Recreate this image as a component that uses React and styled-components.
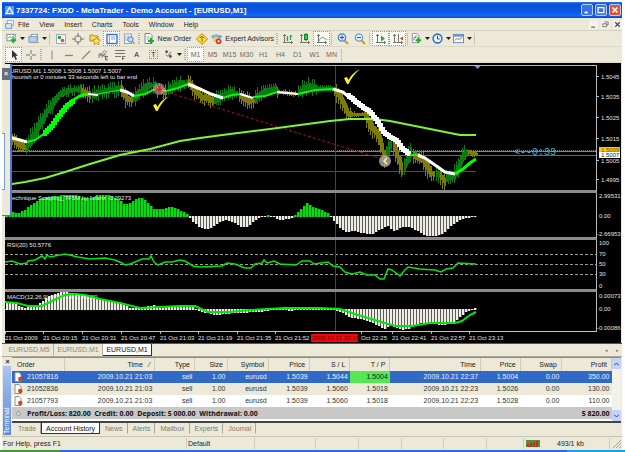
import React from 'react';
import styled, {createGlobalStyle} from 'styled-components';

const GlobalStyle = createGlobalStyle`
    * { box-sizing: border-box; }
    body {
        margin: 0;
        background: #fdfdfd;
        font-family: "Liberation Sans", Arial, sans-serif;
        font-size: 7px;
        color: #222;
    }
    button {
        font: inherit;
        color: inherit;
        border: 0;
        padding: 0;
        margin: 0;
        background: none;
    }
`;

const Page = styled.div`
    display: flex;
    flex-direction: column;
`;
const Window = styled.div`
    display: flex;
    flex-direction: column;
    margin: 2px 3px 0 2px;
    background: #ece9d8;
`;

/* title and menu */
const TitleBar = styled.header`
    display: flex;
    align-items: center;
    gap: 2px;
    height: 16px;
    padding: 0 1px 0 3px;
    background: linear-gradient(#2a7cf0, #0a4fd6 15%, #0b57e4 60%, #1268f8 85%, #0a45c0);
`;
const TitleText = styled.h1`
    flex: 1;
    margin: 0;
    font: bold 8px "Liberation Sans", Arial, sans-serif;
    color: #fff;
    white-space: nowrap;
`;
const WinButton = styled.button`
    display: flex;
    width: 12px;
    height: 12px;
    border: 1px solid #b9cdf5;
    border-radius: 2px;
    background: ${(p) => (p.$close ? '#e0532c' : '#3a72e4')};
`;
const MenuBar = styled.nav`
    display: flex;
    align-items: center;
    gap: 10px;
    height: 13px;
    padding: 0 0 0 3px;
    border-bottom: 1px solid #d6d2c2;
`;
const MenuIcon = styled.span`
    display: flex;
    margin-right: -6px;
`;
const MdiButtons = styled.div`
    display: flex;
    gap: 3px;
    margin-left: auto;
    button {
        display: flex;
        width: 9px;
        height: 9px;
        background: #f4f2ea;
    }
`;

/* toolbars */
const Toolbar = styled.div`
    display: flex;
    align-items: center;
    height: 16px;
    padding-left: 3px;
    border-bottom: 1px solid #dedac8;
`;
const Grip = styled.span`
    width: 2px;
    height: 11px;
    margin: 0 1px;
    background: repeating-linear-gradient(#b4b09e 0 1px, #ece9d8 1px 2px);
`;
const Divider = styled.span`
    width: 1px;
    height: 12px;
    margin: 0 2px 0 1px;
    background: #c8c4b2;
`;
const ToolButton = styled.button`
    display: flex;
    align-items: center;
    justify-content: center;
    gap: 3px;
    flex: none;
    width: ${(p) => p.$w || 17}px;
    height: 15px;
    color: ${(p) => (p.$period ? '#6d6a60' : '#222')};
    border: 1px dotted ${(p) => (p.$on ? '#9a978c' : 'transparent')};
    background: ${(p) => (p.$on ? '#f8f7f2' : 'none')};
    white-space: nowrap;
`;

/* chart */
const ChartArea = styled.main`
    position: relative;
    margin: 0 1px 0 3px;
    padding-top: 2px;
    background: #000;
`;
const Pane = styled.section`
    display: grid;
    grid-template-columns: 1fr 24px;
`;
const Plot = styled.svg`
    display: block;
    width: 100%;
    height: ${(p) => p.$h}px;
    border-right: 1px solid #b8b8b8;
    border-top: ${(p) => (p.$top ? '1px solid #b8b8b8' : '0')};
    border-bottom: ${(p) => (p.$last ? '1px solid #c8c8c8' : '3px solid #8c8c8c')};
`;
const Scale = styled.svg`
    display: block;
    width: 24px;
    height: ${(p) => p.$h}px;
    font-size: 6px;
    fill: #e0e0e0;
`;
const TimeScale = styled.svg`
    display: block;
    width: 100%;
    height: 11px;
    font-size: 6px;
    fill: #e0e0e0;
`;
// narrow leftover of the collapsed Navigator, floating over the chart
const DockedPanel = styled.aside`
    position: absolute;
    left: -3px;
    top: 1px;
    width: 10px;
    height: 152px;
    background: #ece9d8;
    border-right: 2px solid #4a74e0;
    border-bottom: 1px solid #4a74e0;
    display: flex;
    flex-direction: column;
    justify-content: space-between;
`;
const DockClose = styled.button`
    width: 8px;
    height: 12px;
    margin-top: 4px;
    background: #6c6c74;
    color: #fff;
    font-weight: bold;
    line-height: 10px;
`;
const DockList = styled.div`
    width: 3px;
    height: 57px;
    margin-bottom: 25px;
    border: 1px solid #7f9db9;
    border-left: 0;
    background: #fff;
`;

/* tabs */
const ChartTabs = styled.div`
    display: flex;
    align-items: flex-start;
    height: 14px;
    padding-left: 3px;
    border-top: 1px solid #555;
    border-bottom: 1px solid #aaa799;
`;
const ChartTab = styled.button`
    width: 49px;
    height: 12px;
    color: ${(p) => (p.$on ? '#111' : '#8a8779')};
    background: ${(p) => (p.$on ? '#fff' : 'none')};
    border-right: 1px solid ${(p) => (p.$on ? '#333' : '#b5b1a0')};
    border-bottom: 1px solid ${(p) => (p.$on ? '#333' : 'transparent')};
`;
const TabArrows = styled.div`
    display: flex;
    gap: 8px;
    margin: 3px 3px 0 auto;
    button { color: #777; font-size: 5px; }
`;

/* terminal */
const Terminal = styled.section`
    display: flex;
    height: 78px;
`;
const SideStrip = styled.div`
    display: flex;
    flex-direction: column;
    justify-content: space-between;
    width: 10px;
    padding-left: 1px;
    button { height: 9px; font-weight: bold; }
`;
const SideTitle = styled.div`
    flex: 1;
    width: 8px;
    padding-top: 1px;
    writing-mode: vertical-rl;
    transform: rotate(180deg);
    line-height: 8px;
    color: #fff;
    background: linear-gradient(#5c88dc, #a9c4f2);
`;
const TerminalBody = styled.div`
    flex: 1;
    min-width: 0;
    display: flex;
    flex-direction: column;
`;
const TableWrap = styled.div`
    display: flex;
    height: 66px;
    margin-right: 1px;
    border-top: 1px solid #8f8c80;
    border-bottom: 2px solid #444;
    background: #fff;
`;
const Orders = styled.table`
    flex: 1;
    align-self: flex-start;
    table-layout: fixed;
    width: 100%;
    border-collapse: collapse;
    th, td {
        height: 12px;
        padding: 0 2px;
        line-height: 8px;
        text-align: right;
        white-space: nowrap;
        font-weight: normal;
    }
    th {
        height: 13px;
        padding-right: 4px;
        background: #ece9d8;
        border-right: 1px solid #d0ccba;
    }
    th:first-child, td:first-child { text-align: left; }
    th:first-child { padding-left: 5px; }
`;
const OrderRow = styled.tr`
    background: ${(p) => (p.$on ? '#316ac5' : p.$alt ? '#ece9d8' : '#fff')};
    color: ${(p) => (p.$on ? '#e8effc' : '#333')};
`;
const HitCell = styled.td`
    background: ${(p) => (p.$hit ? '#55e855' : 'none')};
    color: ${(p) => (p.$hit ? '#123' : 'inherit')};
`;
const OrderId = styled.span`
    display: flex;
    align-items: center;
    gap: 4px;
`;
const TotalRow = styled.tr`
    background: #c8c8c6;
    color: #111;
    td { font: bold 7px "Open Sans", sans-serif; }
`;
const ScrollBar = styled.div`
    display: flex;
    flex-direction: column;
    justify-content: space-between;
    width: 9px;
    background: #f3f2ea;
    button {
        display: flex;
        align-items: center;
        justify-content: center;
        width: 9px;
        height: 11px;
        background: #c3d3fb;
        border-radius: 1px;
    }
`;
const TerminalTabs = styled.div`
    display: flex;
    height: 12px;
    padding-left: 1px;
`;
const TerminalTab = styled.button`
    height: 11px;
    padding: 0 4px;
    color: ${(p) => (p.$on ? '#111' : '#7d7a6e')};
    background: ${(p) => (p.$on ? '#fff' : 'none')};
    border-right: 1px solid ${(p) => (p.$on ? '#333' : '#a9a698')};
    border-bottom: 1px solid ${(p) => (p.$on ? '#333' : 'transparent')};
    border-left: 1px solid ${(p) => (p.$on ? '#333' : 'transparent')};
`;

const StatusBar = styled.footer`
    display: grid;
    grid-template-columns: 185px 68px 61px 43px 43px 42px 43px 37px 1fr 12px;
    align-items: center;
    height: 14px;
    margin-top: 1px;
    border-top: 1px solid #c8c4b2;
    > span {
        display: flex;
        align-items: center;
        height: 11px;
        padding-left: 1px;
        border-right: 1px solid #d0ccba;
    }
`;
const TaskBar = styled.div`
    display: grid;
    grid-template-columns: 60px 1fr 58px;
    height: 3px;
    background: #2a6be8;
    span:first-child { background: #3a9a3c; }
    span:last-child { background: #18a0f0; }
`;

const Icon = ({children, size = 12}) => (
    <svg width={size} height={size} viewBox="0 0 12 12" fill="none" aria-hidden="true">{children}</svg>
);

const Plus = ({x, y, c = '#1fae2b'}) => (
    <path d={`M${x - 3} ${y}h6M${x} ${y - 3}v6`} stroke={c} strokeWidth="2.2"/>
);
const Axes = () => <path d="M2.5 1v9M1 9.5h10M9.5 8v3M1 2.5h3" stroke="#77746a"/>;

const icons = {
    newChart: <><rect x="1" y="1.5" width="9" height="7" fill="#fff" stroke="#7d8894"/><path d="M2 6l2-2 2 1 3-2" stroke="#678"/><Plus x={8} y={8}/></>,
    profiles: <><rect x="3.5" y="1.5" width="7" height="6" fill="#f5f8fc" stroke="#7d92b4"/><rect x="1" y="4" width="9" height="6" fill="#b8d0ee" stroke="#7490b8"/><path d="M3 10.5h9" stroke="#999"/></>,
    market: <><rect x="1.5" y="1.5" width="9" height="9" fill="#f4fafe" stroke="#98adc5"/><circle cx="4.5" cy="4.5" r="1.8" fill="#28a43c"/><circle cx="7.5" cy="7.5" r="1.8" fill="#d84c38"/></>,
    target: <><circle cx="6" cy="6" r="3.3" stroke="#777"/><path d="M6 0v4M6 8v4M0 6h4M8 6h4" stroke="#777"/></>,
    navigator: <><path d="M1 2h3l1 1h4v5H1z" fill="#f6dc60" stroke="#b58d1a"/><path d="M7.500 4l1.200 2.500 2.800.4-2 2 .5 2.800-2.500-1.300-2.500 1.300.5-2.800-2-2 2.800-.4z" fill="#ffe45c" stroke="#a8821c" strokeWidth=".7"/></>,
    terminal: <><rect x="1" y="1.500" width="10" height="9" fill="#fff" stroke="#3f71c8" strokeWidth="1.400"/><path d="M3.500 2v8M5 4h4M5 6h4" stroke="#7aa5dd"/></>,
    tester: <><rect x="1.500" y="1" width="7" height="9.500" fill="#f6f8fb" stroke="#92a5bd"/><path d="M3 3v5M5 2v6M7 3v5" stroke="#a4b4cc"/><circle cx="7.500" cy="6.500" r="2.700" fill="#c2dcf8" stroke="#4b7fc4"/><path d="M9.500 8.500l2 2.500" stroke="#c79c28" strokeWidth="1.600"/></>,
    order: <><path d="M2 .5h5l2 2v8H2z" fill="#fff" stroke="#7b8590"/><path d="M3.500 4h4M3.500 6h3" stroke="#9ab"/><Plus x={8} y={8}/></>,
    editor: <><path d="M6 .5L11.500 6 6 11.500.5 6z" fill="#ffda3c" stroke="#b58410"/><path d="M6 3v6M4 5l2-2 2 2" stroke="#9b6e00"/></>,
    advisors: <><ellipse cx="6" cy="3.500" rx="5.500" ry="2" fill="#6aa0de"/><path d="M2.500 4c0-4 6-4 6 0" fill="#7fb2ea"/><circle cx="5" cy="6.500" r="3" fill="#f1cd52"/><circle cx="8" cy="8.500" r="3" fill="#dc3626"/><rect x="7" y="7.500" width="2" height="2" fill="#fff"/></>,
    bars: <><Axes/><path d="M5.500 3v5M8.500 2v5M8.500 3h2M5.500 6h-1" stroke="#23a236" strokeWidth="1.200"/></>,
    candles: <><Axes/><path d="M7 0v8" stroke="#148222"/><rect x="5.500" y="1.500" width="3" height="5" fill="#34cf45" stroke="#148222"/></>,
    line: <><Axes/><path d="M3 8c2-5 4-4 8-1" stroke="#5aa568"/></>,
    zoomIn: <><path d="M7.500 7.500l3.500 3.500" stroke="#c79c28" strokeWidth="2"/><circle cx="5" cy="4.500" r="3.700" fill="#d3e8fc" stroke="#4b7fc4" strokeWidth="1.200"/><path d="M3 4.500h4M5 2.500v4" stroke="#2458a8"/></>,
    zoomOut: <><path d="M7.500 7.500l3.500 3.500" stroke="#c79c28" strokeWidth="2"/><circle cx="5" cy="4.500" r="3.700" fill="#e0effc" stroke="#7396c4" strokeWidth="1.200"/><path d="M3 4.500h4" stroke="#2458a8"/></>,
    scroll: <><Axes/><path d="M6 2.500l4 3-4 3z" fill="#25a638"/></>,
    shift: <><Axes/><path d="M6.500 1v8" stroke="#777"/><path d="M11 3.500L8 5.500l3 2z" fill="#cc3c24"/></>,
    indicator: <><path d="M1.500.5h5l2 2v8h-7z" fill="#fff" stroke="#8993a0"/><path d="M3 8c1-5 2-5 4-5M3 5h3" stroke="#777"/><Plus x={8} y={8}/></>,
    clock: <><circle cx="6" cy="6" r="4.800" fill="#eef6ff" stroke="#3470cc" strokeWidth="1.700"/><path d="M6 3v3.500h2.500" stroke="#345"/></>,
    template: <><rect x=".5" y="1.500" width="11" height="9" fill="#f7fbff" stroke="#5b8ac4"/><path d="M1 3h10" stroke="#5b98de" strokeWidth="2"/><path d="M2 8l2.500-2 2 1L10 5" stroke="#c45c3c"/></>,
    cursor: <path d="M4 1v8l2-1.700L7.500 11 9 10.300 7.500 6.800H10z" fill="#333"/>,
    cross: <path d="M6 1v4M6 7v4M1 6h4M7 6h4" stroke="#77746a"/>,
    vline: <path d="M6 1.500v9" stroke="#88857a"/>,
    hline: <path d="M2 6.500h8" stroke="#88857a" strokeWidth="1.300"/>,
    trend: <path d="M2 10l8-8" stroke="#88857a" strokeWidth="1.300"/>,
    channel: <><path d="M1 9l7-8M4 9l6-7M1 6h8M2 4l6 4" stroke="#77746a" strokeWidth=".9"/><path d="M8.500 7v4M8.500 7.500h2.500M8.500 9h2M8.500 11h2.500" stroke="#555" strokeWidth=".8"/></>,
    fibo: <><path d="M1 1.500h10M1 4.500h10M1 7.500h6" stroke="#77746a"/><path d="M8.500 7v4M8.500 7.500h3M8.500 9.500h2" stroke="#555" strokeWidth=".8"/></>,
    text: <rect x="1.500" y="1.500" width="9" height="9" stroke="#9a978c" strokeDasharray="1 1"/>,
    arrows: <><path d="M2 3l2-2 2 2-2 2zM6 8l2-2 2 2-2 2z" fill="#555"/><path d="M3 6l2 2 4-5" stroke="#666"/></>,
};

const Drop = () => (
    <svg width="5" height="3" viewBox="0 0 5 3" aria-hidden="true"><path d="M0 0h5L2.500 3z" fill="#222"/></svg>
);

const LabelBox = styled.span`
    width: 9px;
    height: 9px;
    border: 1px dotted #8a877c;
    line-height: 7px;
    text-align: center;
`;

const Tool = ({name, label, drop, on, w, children}) => (
    <ToolButton $on={on} $w={w} aria-label={label}>
        {name && <Icon size={drop ? 11 : 12}>{icons[name]}</Icon>}
        {children}
        {drop && <Drop/>}
    </ToolButton>
);

// series are [x, y] knots, sampled by linear interpolation
const sample = (knots, x) => {
    for (let i = 1; i < knots.length; i++) {
        if (x <= knots[i][0]) {
            const [x0, y0] = knots[i - 1];
            const [x1, y1] = knots[i];
            return y0 + ((y1 - y0) * (x - x0)) / (x1 - x0);
        }
    }
    return knots[knots.length - 1][1];
};
const toPath = (knots) => 'M' + knots.map((k) => k.join(' ')).join('L');
const stepPath = (knots) => {
    let d = `M${knots[0][0]} ${Math.round(knots[0][1])}`;
    const end = knots[knots.length - 1][0];
    for (let x = knots[0][0]; x < end; x += 2) {
        d += `H${x}V${Math.round(sample(knots, x))}`;
    }
    return d + `H${end}`;
};
const rnd = (n) => {
    const v = Math.sin(n * 12.9898) * 43758.5453;
    return v - Math.floor(v);
};

const UP = '#0b7a12';
const DOWN = '#7d7a0c';

const priceLegs = [
    [DOWN, [[6, 136], [12, 139], [18, 144], [25, 148]]],
    [UP, [[26, 146], [33, 135], [40, 122], [48, 109], [55, 99], [60, 94], [67, 91], [75, 90], [80, 89]]],
    [DOWN, [[81, 91], [90, 96]]],
    [UP, [[92, 95], [100, 92], [110, 90], [120, 88]]],
    [DOWN, [[121, 91], [126, 99], [131, 100]]],
    [UP, [[133, 98], [140, 91], [147, 86], [155, 85]]],
    [DOWN, [[157, 89], [166, 93]]],
    [UP, [[168, 88], [178, 84], [186, 83]]],
    [DOWN, [[188, 83], [195, 91], [200, 97], [206, 98], [212, 101]]],
    [UP, [[214, 100], [223, 95], [229, 92], [237, 94]]],
    [DOWN, [[239, 96], [246, 101], [253, 101]]],
    [UP, [[255, 98], [262, 92], [275, 88]]],
    [DOWN, [[277, 92], [296, 94]]],
    [UP, [[298, 92], [308, 86], [314, 88], [332, 89]]],
    [DOWN, [[334, 91], [340, 98], [344, 107], [348, 114], [365, 115], [368, 123], [375, 132], [379, 140], [382, 150], [385, 160]]],
    [UP, [[386, 153], [391, 141]]],
    [DOWN, [[393, 144], [397, 157], [402, 171]]],
    [UP, [[404, 165], [411, 150]]],
    [DOWN, [[413, 155], [422, 160], [430, 173], [434, 175]]],
    [UP, [[436, 174], [439, 175]]],
    [DOWN, [[440, 176], [444, 182]]],
    [UP, [[446, 178], [454, 175], [458, 166], [462, 157], [466, 153]]],
    [DOWN, [[468, 153], [476, 154]]],
];

const candles = priceLegs.flatMap(([color, knots]) => {
    const out = [];
    const first = knots[0][0];
    const last = knots[knots.length - 1][0];
    for (let x = first; x <= last; x += 2) {
        const y = sample(knots, x);
        const slope = Math.abs(sample(knots, x + 2) - sample(knots, x - 2));
        const calm = x > 464 || (x > 278 && x < 298) || (x > 316 && x < 335) || (x > 350 && x < 364);
        const body = (calm ? 2 : 3) + slope * 0.8 + rnd(x) * (calm ? 1 : 4);
        out.push({x, y, body, color, hi: rnd(x + 7) * (calm ? 2 : 6), lo: rnd(x + 3) * (calm ? 2 : 6)});
    }
    return out;
});

const fastMa = [
    ['#fff', 3, [[5, 137], [12, 138], [20, 140], [27, 142]]],
    ['#0f0', 2, [[27, 142], [35, 140], [45, 133]]],
    ['#0f0', 4, [[43, 134], [50, 127], [55, 120], [65, 107], [75, 99]]],
    ['#0f0', 3, [[73, 100], [80, 96], [88, 94]]],
    ['#fff', 2, [[88, 94], [98, 95]]],
    ['#0f0', 1, [[98, 94], [120, 90]]],
    ['#fff', 3, [[120, 90], [127, 92], [134, 96]]],
    ['#0f0', 2, [[134, 96], [145, 94], [153, 90], [158, 89]]],
    ['#fff', 1, [[158, 89], [166, 91]]],
    ['#0f0', 2, [[166, 91], [178, 88], [188, 84]]],
    ['#fff', 3, [[188, 84], [200, 89], [211, 94], [223, 98]]],
    ['#0f0', 2, [[223, 98], [232, 95], [240, 94]]],
    ['#fff', 2, [[240, 94], [253, 98]]],
    ['#0f0', 2, [[253, 97], [265, 96], [277, 92]]],
    ['#fff', 2, [[277, 92], [298, 94]]],
    ['#0f0', 2, [[298, 94], [315, 90], [333, 89]]],
    ['#fff', 3, [[333, 89], [343, 92], [350, 98]]],
    ['#fff', 4, [[347, 95], [358, 104], [368, 111], [376, 120], [383, 132], [390, 138], [396, 140], [402, 149], [410, 155]]],
    ['#0f0', 2, [[410, 155], [418, 155]]],
    ['#fff', 3, [[418, 155], [425, 158], [435, 165], [445, 172], [455, 174]]],
    ['#0f0', 3, [[455, 174], [463, 169], [470, 163], [476, 159]]],
];

const slowMa = [[5, 185], [12, 184], [25, 182], [45, 178], [65, 172], [90, 164], [120, 155], [150, 149], [180, 141], [200, 138], [230, 134], [270, 129], [300, 125], [330, 121], [350, 119], [375, 119], [390, 121], [410, 125], [430, 129], [450, 133], [460, 135], [476, 135]];

const scalping = [[5, 211], [12, 212], [17, 213], [22, 211], [30, 205], [38, 199], [50, 196], [65, 195], [75, 195], [82, 198], [90, 198], [97, 195], [110, 195], [118, 200], [125, 205], [133, 200], [140, 197], [146, 202], [153, 209], [160, 209], [168, 207], [175, 208], [183, 212], [188, 216], [193, 222], [200, 227], [207, 228], [213, 225], [223, 219], [232, 221], [240, 226], [246, 226], [252, 221], [258, 217], [266, 215], [272, 216], [280, 219], [288, 218], [293, 216], [298, 211], [306, 203], [312, 207], [320, 210], [327, 213], [331, 217], [335, 222], [340, 228], [346, 231], [355, 230], [365, 233], [372, 233], [380, 228], [387, 225], [393, 230], [400, 227], [407, 225], [415, 229], [425, 235], [435, 235], [443, 232], [450, 225], [458, 219], [465, 217], [476, 216]];

const rsi = [[5, 262], [12, 261], [20, 264], [27, 263], [28, 261], [35, 260], [42, 256], [45, 259], [47, 255], [50, 257], [65, 254], [78, 257], [90, 259], [105, 258], [115, 260], [122, 263], [125, 265], [130, 264], [135, 262], [142, 259], [149, 259], [151, 256], [154, 262], [158, 265], [165, 262], [172, 262], [180, 260], [185, 261], [193, 266], [200, 267], [222, 266], [227, 263], [235, 264], [245, 268], [251, 268], [255, 264], [262, 263], [264, 260], [267, 263], [274, 261], [280, 264], [296, 265], [302, 261], [310, 261], [314, 264], [328, 262], [333, 266], [340, 267], [345, 272], [352, 274], [360, 272], [367, 275], [375, 275], [380, 279], [384, 279], [388, 269], [392, 270], [400, 276], [404, 271], [408, 267], [420, 269], [435, 270], [441, 272], [446, 269], [453, 268], [458, 263], [476, 264]];

const macd = [[5, 302], [15, 304], [22, 308], [30, 307], [38, 304], [45, 298], [52, 294], [62, 292], [75, 293], [90, 296], [100, 299], [110, 301], [120, 303], [130, 308], [145, 307], [152, 305], [160, 308], [175, 306], [190, 306], [195, 309], [205, 312], [215, 314], [235, 312], [260, 311], [275, 308], [290, 310], [310, 307], [330, 308], [340, 311], [350, 317], [360, 318], [370, 321], [378, 325], [384, 328], [390, 324], [395, 327], [401, 329], [408, 328], [412, 325], [418, 322], [430, 323], [442, 324], [452, 322], [460, 315], [467, 310], [476, 308]];
const macdSignal = [[5, 302], [17, 303], [28, 306], [42, 306], [52, 301], [65, 295], [75, 294], [85, 295], [100, 299], [120, 303], [140, 308], [160, 307], [180, 306], [195, 306], [208, 312], [230, 312], [250, 310], [285, 308], [320, 308], [340, 309], [355, 314], [378, 321], [395, 326], [412, 326], [430, 323], [455, 323], [462, 321], [470, 315], [476, 312]];

const Histogram = ({knots, base, up, upDim}) => {
    const bars = [];
    for (let x = 6; x <= 476; x += 3) {
        const y = Math.round(sample(knots, x));
        const top = Math.min(y, base);
        const h = Math.abs(y - base) + 1;
        bars.push(
            <g key={x}>
                <rect x={x} y={top} width="3" height={h} fill={y < base ? upDim : '#5c5a56'}/>
                <rect x={x} y={top} width="2" height={h} fill={y < base ? up : '#efede6'}/>
            </g>
        );
    }
    return <g shapeRendering="crispEdges">{bars}</g>;
};

const Cursor = () => (
    <path d="M335 60h1v285h-1z" fill="#c01010" shapeRendering="crispEdges"/>
);

const Check = ({x, y}) => (
    <path transform={`translate(${x} ${y})`} d="M0 9l3-1 1.500 3Q8 4 16 0 8 7 4.500 15L3 15z" fill="#fff01c"/>
);

const prices = [['1.5045', 77], ['1.5035', 97], ['1.5025', 118], ['1.5015', 139], ['1.5005', 161], ['1.4995', 180]];

const PricePane = () => (
    <Pane>
        <Plot $h={128} $top>
            <g transform="translate(-5 -66)">
                <path d="M5 150.500H600" stroke="#8c8420" strokeDasharray="1 1"/>
                <path d="M5 151.500H600" stroke="#9c8c20"/>
                <path d="M5 155.500H600" stroke="#5a62b0"/>
                <path d="M5 171h471v1H5z" fill="#c81c12" shapeRendering="crispEdges"/>
                <Cursor/>
                <path d="M160 90L385 160" stroke="#b01010" strokeDasharray="3 2"/>
                <g shapeRendering="crispEdges">
                    {candles.map((c) => (
                        <g key={c.x} fill={c.color}>
                            <rect x={c.x} y={c.y - c.body / 2 - c.hi} width="1" height={c.body + c.hi + c.lo}/>
                            <rect x={c.x} y={c.y - c.body / 2} width="2" height={c.body}/>
                        </g>
                    ))}
                </g>
                <path d={toPath(slowMa)} fill="none" stroke="#7cf53a" strokeWidth="2"/>
                {fastMa.map(([color, w, knots]) => (
                    <path key={knots[0][0]} d={w > 3 ? stepPath(knots) : toPath(knots)} fill="none" stroke={color} strokeWidth={w}/>
                ))}
                <circle cx="159" cy="89" r="6" fill="#a89890" opacity=".65"/>
                <path d="M156 89.500h6M159.500 86v6" stroke="#f01818" strokeWidth="2"/>
                <circle cx="385" cy="161" r="6" fill="#b0a49a" opacity=".85"/>
                <path d="M387 158l-3 3 3 3" stroke="#ffe9b0" strokeWidth="1.500" fill="none"/>
                <Check x={344} y={69}/>
                <Check x={153} y={96}/>
                <path d="M474.500 66h6l-3 3z" fill="#7c90d8"/>
                <text x="10" y="73" fontSize="6" fill="#e8e8e8">URUSD,M1  1.5008 1.5008 1.5007 1.5007</text>
                <text x="12" y="79" fontSize="6" fill="#e8e8e8">hourish or 0 minutes 33 seconds left to bar end</text>
                <text x="514" y="155" fontSize="10" fill="#38b8cc" fontFamily="Liberation Mono, monospace">{'<--0:33'}</text>
            </g>
        </Plot>
        <Scale $h={128}>
            <g transform="translate(-597 -65)">
                {prices.map(([t, y]) => (
                    <g key={t}>
                        <path d={`M597 ${y - 0.5}h2`} stroke="#bbb"/>
                        <text x="601" y={y + 2}>{t}</text>
                    </g>
                ))}
                <rect x="599" y="147" width="21" height="5" fill="#f8c80c"/>
                <text x="601" y="152" fill="#765400">1.5009</text>
                <rect x="599" y="152" width="21" height="6" fill="#fff"/>
                <text x="601" y="157" fill="#222">1.5007</text>
            </g>
        </Scale>
    </Pane>
);

const ScaleLabels = ({top, h, items}) => (
    <Scale $h={h}>
        <g transform={`translate(-597 -${top})`}>
            {items.map(([t, y]) => <text key={t} x={t[0] === '-' ? 597 : 599} y={y + 2}>{t}</text>)}
        </g>
    </Scale>
);

const times = [[5, '21 Oct 2009'], [43, '21 Oct 20:15'], [82, '21 Oct 20:31'], [121, '21 Oct 20:47'], [160, '21 Oct 21:03'], [198, '21 Oct 21:19'], [237, '21 Oct 21:35'], [275, '21 Oct 21:52'], [361, 'Oct 22:25'], [392, '21 Oct 22:41'], [431, '21 Oct 22:57'], [469, '21 Oct 23:13']];

const Chart = () => (
    <ChartArea>
        <PricePane/>
        <Pane>
            <Plot $h={47}>
                <g transform="translate(-5 -193)">
                    <path d="M5 216.500H477" stroke="#999"/>
                    <Histogram knots={scalping} base={216} up="#00e00a" upDim="#007a06"/>
                    <Cursor/>
                    <text x="12" y="200" fontSize="6" fill="#e8e8e8">echnique Scalping_TF5M by fxfariz -0.09273</text>
                </g>
            </Plot>
            <ScaleLabels top={193} h={47} items={[['2.99531', 196], ['0.00', 216], ['-2.66953', 234]]}/>
        </Pane>
        <Pane>
            <Plot $h={52}>
                <g transform="translate(-5 -240)">
                    <path d="M5 254.500H600M5 264.500H600M5 274.500H600" stroke="#a09e90" strokeDasharray="3 2"/>
                    <Cursor/>
                    <path d={toPath(rsi)} fill="none" stroke="#00e808" strokeWidth="1.500"/>
                    <text x="7" y="247" fontSize="6" fill="#e8e8e8">RSI(20) 50.5776</text>
                </g>
            </Plot>
            <ScaleLabels top={240} h={52} items={[['100', 243], ['70', 254], ['50', 264], ['30', 274], ['0', 286]]}/>
        </Pane>
        <Pane>
            <Plot $h={40} $last>
                <g transform="translate(-5 -292)">
                    <path d="M5 309.500H477" stroke="#999"/>
                    <Histogram knots={macd} base={309} up="#efede6" upDim="#5c5a56"/>
                    <Cursor/>
                    <text x="7" y="299" fontSize="6" fill="#e8e8e8">MACD(12,26,9) 0.00014 -0.00020</text>
                    <path d={toPath(macdSignal)} fill="none" stroke="#00e808" strokeWidth="2"/>
                </g>
            </Plot>
            <ScaleLabels top={292} h={40} items={[['0.00073', 296], ['0.00', 309], ['-0.00086', 328]]}/>
        </Pane>
        <TimeScale>
            <g transform="translate(-5 -332)">
                {times.map(([x, t]) => (
                    <g key={t}>
                        <path d={`M${x + 0.5} 332v2`} stroke="#bbb"/>
                        <text x={x} y="340">{t}</text>
                    </g>
                ))}
                <rect x="311" y="334" width="47" height="8" fill="#f00808"/>
                <text x="312" y="340" fill="#500">2009.10.21 22:17</text>
            </g>
        </TimeScale>
        <DockedPanel>
            <DockClose aria-label="Close navigator">×</DockClose>
            <DockList/>
        </DockedPanel>
    </ChartArea>
);

const columns = [['Order', 52], ['Time', 90], ['Type', 40], ['Size', 33], ['Symbol', 41], ['Price', 41], ['S / L', 40], ['T / P', 40], ['Time', 90], ['Price', 40], ['Swap', 41], ['Profit', 50]];
const orders = [
    ['21057816', '2009.10.21 21:03', 'sell', '1.00', 'eurusd', '1.5039', '1.5044', '1.5004', '2009.10.21 22:37', '1.5004', '0.00', '350.00'],
    ['21052836', '2009.10.21 21:03', 'sell', '1.00', 'eurusd', '1.5039', '1.5060', '1.5018', '2009.10.21 22:23', '1.5026', '0.00', '130.00'],
    ['21057793', '2009.10.21 21:03', 'sell', '1.00', 'eurusd', '1.5039', '1.5060', '1.5018', '2009.10.21 22:23', '1.5028', '0.00', '110.00'],
];

const DocIcon = () => (
    <svg width="9" height="10" viewBox="0 0 9 10" aria-hidden="true">
        <path d="M1 .5h4l2 2v7H1z" fill="#fff" stroke="#8a8f98"/>
        <circle cx="6.300" cy="7" r="2.200" fill="#d8401c"/>
    </svg>
);

const OrdersTable = () => (
    <TableWrap>
        <Orders>
            <colgroup>
                {columns.map(([name, w], i) => <col key={name + i} width={w}/>)}
            </colgroup>
            <thead>
                <tr>
                    {columns.map(([name], i) => <th key={name + i} scope="col">{i === 1 ? 'Time  \u00a0 ⁄' : name}</th>)}
                </tr>
            </thead>
            <tbody>
                {orders.map((row, r) => (
                    <OrderRow key={row[0]} $on={r === 0} $alt={r === 1}>
                        {row.map((cell, i) => (
                            <HitCell key={i} $hit={r === 0 && i === 7}>
                                {i === 0 ? <OrderId><DocIcon/>{cell}</OrderId> : cell}
                            </HitCell>
                        ))}
                    </OrderRow>
                ))}
                <TotalRow>
                    <td colSpan="11">
                        <OrderId>
                            <Icon size={9}><circle cx="6" cy="6" r="2.500" stroke="#888" fill="#ddd"/></Icon>
                            Profit/Loss: 820.00 &nbsp;Credit: 0.00 &nbsp;Deposit: 5 000.00 &nbsp;Withdrawal: 0.00
                        </OrderId>
                    </td>
                    <td>5 820.00</td>
                </TotalRow>
            </tbody>
        </Orders>
        <ScrollBar>
            <button aria-label="Scroll up"><svg width="5" height="4"><path d="M0 3.500l2.500-2.500L5 3.500" stroke="#345" fill="none"/></svg></button>
            <button aria-label="Scroll down"><svg width="5" height="4"><path d="M0 .5L2.500 3 5 .5" stroke="#345" fill="none"/></svg></button>
        </ScrollBar>
    </TableWrap>
);

const App = () => (
    <Page>
        <GlobalStyle/>
        <Window>
            <TitleBar>
                <svg width="9" height="9" viewBox="0 0 9 9" aria-hidden="true">
                    <rect width="9" height="9" fill="#5a9af0"/>
                    <path d="M1 7.500L4.500 1.500 8 7.500z" fill="none" stroke="#fff" strokeWidth="1.200"/>
                </svg>
                <TitleText>7337724: FXDD - MetaTrader - Demo Account - [EURUSD,M1]</TitleText>
                <WinButton aria-label="Minimize"><Icon size={10}><path d="M3 9h4" stroke="#fff" strokeWidth="2"/></Icon></WinButton>
                <WinButton aria-label="Maximize"><Icon size={10}><path d="M2.500 3h7v6h-7z" stroke="#fff" strokeWidth="1.500"/></Icon></WinButton>
                <WinButton $close aria-label="Close"><Icon size={10}><path d="M3 3l6 6M9 3L3 9" stroke="#fff" strokeWidth="2"/></Icon></WinButton>
            </TitleBar>
            <MenuBar>
                <MenuIcon>
                    <Icon size={9}><rect x="3" y="1" width="8" height="6" fill="#fff" stroke="#6c98d0"/><rect x="1" y="5" width="8" height="6" fill="#d8e8fa" stroke="#4b7fc4"/></Icon>
                </MenuIcon>
                {['File', 'View', 'Insert', 'Charts', 'Tools', 'Window', 'Help'].map((m) => <button key={m}>{m}</button>)}
                <MdiButtons>
                    <button aria-label="Minimize chart"><Icon size={9}><path d="M3 9.500h5" stroke="#555" strokeWidth="1.500"/></Icon></button>
                    <button aria-label="Restore chart"><Icon size={9}><path d="M4.500 2.500h5v4h-2M2.500 5h5v4h-5z" stroke="#555"/></Icon></button>
                    <button aria-label="Close chart"><Icon size={9}><path d="M3 3l6 6M9 3L3 9" stroke="#444" strokeWidth="1.500"/></Icon></button>
                </MdiButtons>
            </MenuBar>
            <Toolbar>
                <Tool name="newChart" label="New chart" drop w={21}/>
                <Tool name="profiles" label="Profiles" drop w={22}/>
                <Divider/>
                <Tool name="market" label="Market watch"/>
                <Tool name="target" label="Data window"/>
                <Tool name="navigator" label="Navigator"/>
                <Tool name="terminal" label="Terminal" on/>
                <Tool name="tester" label="Strategy tester"/>
                <Grip/>
                <Tool name="order" label="New Order" w={52}>New Order</Tool>
                <Tool name="editor" label="MetaEditor"/>
                <Tool name="advisors" label="Expert Advisors" w={65}>Expert Advisors</Tool>
                <Grip/>
                <Tool name="bars" label="Bar chart"/>
                <Tool name="candles" label="Candlesticks"/>
                <Tool name="line" label="Line chart" on/>
                <Divider/>
                <Tool name="zoomIn" label="Zoom in"/>
                <Tool name="zoomOut" label="Zoom out"/>
                <Divider/>
                <Tool name="scroll" label="Auto scroll" on/>
                <Tool name="shift" label="Chart shift" on/>
                <Divider/>
                <Tool name="indicator" label="Indicators" drop w={21}/>
                <Tool name="clock" label="Periods" drop w={21}/>
                <Tool name="template" label="Templates" drop w={21}/>
                <Divider/>
            </Toolbar>
            <Toolbar>
                <Tool name="cursor" label="Cursor" on/>
                <Tool name="cross" label="Crosshair"/>
                <Grip/>
                <Tool name="vline" label="Vertical line"/>
                <Tool name="hline" label="Horizontal line"/>
                <Tool name="trend" label="Trendline"/>
                <Tool name="channel" label="Channel"/>
                <Tool name="fibo" label="Fibonacci"/>
                <Tool label="Text">A</Tool>
                <Tool label="Text label"><LabelBox>T</LabelBox></Tool>
                <Tool name="arrows" label="Arrows" drop w={21}/>
                <Grip/>
                {['M1', 'M5', 'M15', 'M30', 'H1', 'H4', 'D1', 'W1', 'MN'].map((p) => (
                    <ToolButton key={p} $period $on={p === 'M1'}>{p}</ToolButton>
                ))}
                <Divider/>
            </Toolbar>
            <Chart/>
            <ChartTabs>
                <ChartTab>EURUSD,M5</ChartTab>
                <ChartTab>EURUSD,M1</ChartTab>
                <ChartTab $on>EURUSD,M1</ChartTab>
                <TabArrows>
                    <button aria-label="Previous tab">◂</button>
                    <button aria-label="Next tab">▸</button>
                </TabArrows>
            </ChartTabs>
            <Terminal>
                <SideStrip>
                    <button aria-label="Close terminal">×</button>
                    <SideTitle>Terminal</SideTitle>
                </SideStrip>
                <TerminalBody>
                    <OrdersTable/>
                    <TerminalTabs>
                        {['Trade', 'Account History', 'News', 'Alerts', 'Mailbox', 'Experts', 'Journal'].map((t) => (
                            <TerminalTab key={t} $on={t === 'Account History'}>{t}</TerminalTab>
                        ))}
                    </TerminalTabs>
                </TerminalBody>
            </Terminal>
            <StatusBar>
                <span>For Help, press F1</span>
                <span>Default</span>
                <span/><span/><span/><span/><span/><span/>
                <span>
                    <svg width="32" height="9" viewBox="0 0 32 9" aria-hidden="true">
                        <path d="M1 1h14v7H1z" fill="#5a8a3a"/>
                        <path d="M3 8V5M6 8V4M9 8V3M12 8V2" stroke="#c43020" strokeWidth="2"/>
                    </svg>
                    493/1 kb
                </span>
                <svg width="12" height="11" aria-hidden="true"><path d="M11 2L3 10M11 5L6 10M11 8l-2 2" stroke="#a9a698"/></svg>
            </StatusBar>
        </Window>
        <TaskBar><span/><span/><span/></TaskBar>
    </Page>
);

export default App;
